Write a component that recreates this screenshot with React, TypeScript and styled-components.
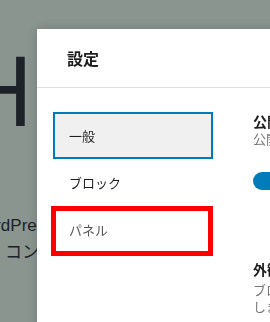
import React from "react";
import styled, { createGlobalStyle } from "styled-components";

const GlobalStyle = createGlobalStyle`
  html, body {
    margin: 0;
    padding: 0;
    width: 100%;
    height: 100%;
    overflow: hidden;
  }
  body {
    background: #8a9590;
    font-family: "Noto Sans", "Noto Sans CJK JP", sans-serif;
  }
`;

type tabType = {
  id: string;
  label: string;
};

const tabs: Array<tabType> = [
  { id: "general", label: "一般" },
  { id: "blocks", label: "ブロック" },
  { id: "panels", label: "パネル" },
];

export default function App() {
  return (
    <>
      <GlobalStyle />
      <Page>
        <Title>H</Title>
        <Para className="first">WordPress へようこそ</Para>
        <Para>コンテンツを作成しましょう</Para>
      </Page>
      <Modal>
        <Header>
          <h1>設定</h1>
        </Header>
        <Body>
          <Nav>
            {tabs.map((tab) => {
              return (
                <Tab
                  key={tab.id}
                  $active={tab.id === "general"}
                  $marked={tab.id === "panels"}
                >
                  {tab.label}
                </Tab>
              );
            })}
          </Nav>
          <Content>
            <Section>
              <h2>公開</h2>
              <p>公開に関するオプションを変更します。</p>
              <ToggleRow>
                <Toggle $on />
                <span>公開前チェックリストを含める</span>
              </ToggleRow>
            </Section>
            <Section className="spaced">
              <h2>外観</h2>
              <p>
                ブロックエディターのインターフェースをカスタマイズ
                <br />
                します。
              </p>
            </Section>
          </Content>
        </Body>
      </Modal>
    </>
  );
}

const Page = styled.div`
  padding-top: 41px;
  color: #1d2228;
`;

const Title = styled.div`
  font-size: 96px;
  line-height: 96px;
  margin-left: -37px;
  font-family: "Noto Sans", sans-serif;
`;

const Para = styled.p`
  margin: 0;
  padding-left: 5px;
  font-size: 17px;
  line-height: 27px;
  white-space: nowrap;
  font-family: "Liberation Sans", "Noto Sans CJK JP", sans-serif;

  &.first {
    margin-top: 75px;
    text-indent: -35px;
  }
`;

const Modal = styled.div`
  position: fixed;
  top: 29px;
  left: 37px;
  right: -200px;
  bottom: -100px;
  background: #ffffff;
  box-shadow: 0 0 10px rgba(0, 0, 0, 0.18);
  display: flex;
  flex-direction: column;
`;

const Header = styled.div`
  height: 58px;
  border-bottom: 1px solid #e0e0e0;
  display: flex;
  align-items: center;
  padding-left: 30px;

  h1 {
    margin: 0;
    font-size: 16px;
    font-weight: 600;
    color: #1e1e1e;
    font-family: "Noto Sans CJK JP", sans-serif;
  }
`;

const Body = styled.div`
  display: flex;
  align-items: flex-start;
`;

const Nav = styled.div`
  display: flex;
  flex-direction: column;
  padding: 24px 16px;
  width: 160px;
  flex-shrink: 0;
`;

const Tab = styled.div<{ $active?: boolean; $marked?: boolean }>`
  position: relative;
  box-sizing: border-box;
  height: 47px;
  display: flex;
  align-items: center;
  padding-left: 16px;
  font-size: 13px;
  font-family: "Noto Sans CJK JP", sans-serif;
  color: ${(p) => (p.$marked ? "#555555" : "#1e1e1e")};
  background: ${(p) => (p.$active ? "#f0f0f0" : "transparent")};
  border: ${(p) => (p.$active ? "2px solid #007cba" : "none")};
  padding-left: ${(p) => (p.$active ? "14px" : "16px")};

  &::after {
    content: "";
    display: ${(p) => (p.$marked ? "block" : "none")};
    position: absolute;
    left: -2px;
    top: 0;
    right: 0;
    bottom: -3px;
    border: 5px solid #ff0000;
  }
`;

const Content = styled.div`
  padding: 24px 0 0 24px;
  display: flex;
  flex-direction: column;
  white-space: nowrap;
  font-family: "Noto Sans CJK JP", sans-serif;
`;

const Section = styled.div`
  h2 {
    margin: 0;
    font-size: 14px;
    line-height: 18px;
    font-weight: 600;
    color: #1e1e1e;
  }

  p {
    margin: 0;
    font-size: 13px;
    line-height: 17px;
    color: #757575;
  }

  &.spaced {
    margin-top: 70px;

    p {
      margin-top: 3px;
    }
  }
`;

const ToggleRow = styled.div`
  display: flex;
  align-items: center;
  gap: 12px;
  margin-top: 24px;
  font-size: 13px;
  color: #1e1e1e;
`;

const Toggle = styled.span<{ $on?: boolean }>`
  position: relative;
  display: inline-block;
  width: 36px;
  height: 18px;
  border-radius: 9px;
  background: ${(p) => (p.$on ? "#007cba" : "#ffffff")};

  &::after {
    content: "";
    position: absolute;
    top: 3px;
    left: ${(p) => (p.$on ? "21px" : "3px")};
    width: 12px;
    height: 12px;
    border-radius: 50%;
    background: #ffffff;
  }
`;
